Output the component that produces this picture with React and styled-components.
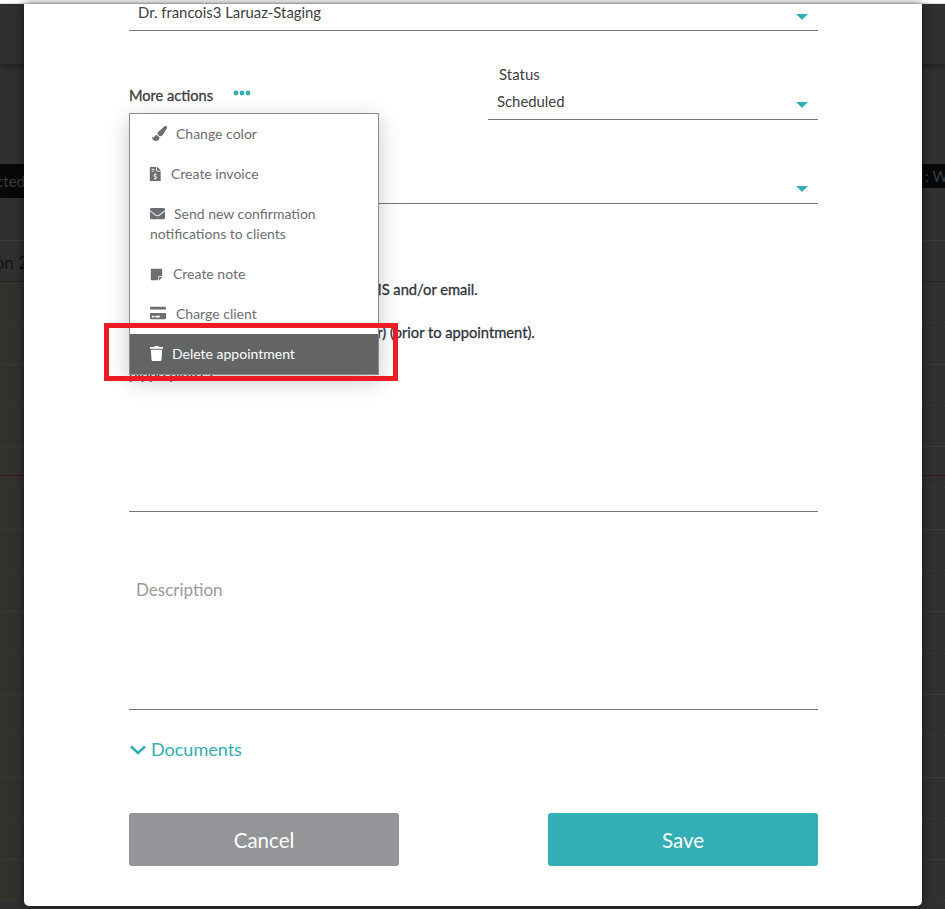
import React from 'react'
import styled, { createGlobalStyle } from 'styled-components'
import {
  FaPaintBrush,
  FaFileInvoiceDollar,
  FaEnvelope,
  FaStickyNote,
  FaCreditCard,
  FaTrash,
} from 'react-icons/fa'

const teal = '#33aeb4'

const GlobalStyle = createGlobalStyle`
  html, body {
    margin: 0;
    padding: 0;
    background: #2f3130;
  }
  body {
    font-family: Lato, "Open Sans", sans-serif;
    overflow: hidden;
  }
  * {
    box-sizing: border-box;
  }
`

const Page = styled.div`
  position: relative;
  width: 945px;
  height: 909px;
  overflow: hidden;
  background: #2f3130;
`

/* dimmed calendar behind the modal */
const TopStrip = styled.div`
  height: 4px;
  background: #fff;
  border-bottom: 1px solid #e2e2e2;
`

const BackHeader = styled.div`
  height: 60px;
  background: #2f2f2f;
  box-shadow: 0 3px 5px rgba(0, 0, 0, 0.35);
`

const ChipRow = styled.div`
  display: flex;
  justify-content: space-between;
  align-items: flex-start;
  margin-top: 100px;
  height: 76px;
`

const Chip = styled.div`
  display: flex;
  align-items: center;
  justify-content: ${(p) => (p.$right ? 'flex-start' : 'flex-end')};
  width: ${(p) => (p.$right ? '23px' : '25px')};
  height: ${(p) => (p.$right ? '24px' : '34px')};
  padding-left: ${(p) => (p.$right ? '3px' : '0')};
  overflow: hidden;
  white-space: nowrap;
  background: #06080a;
  color: #3c3c3c;
  font-size: 15px;
`

const BackTitle = styled.div`
  display: flex;
  align-items: center;
  justify-content: flex-end;
  width: 28px;
  height: 42px;
  overflow: hidden;
  white-space: nowrap;
  color: #131313;
  font-size: 17px;
`

const TitleRow = styled.div`
  height: 42px;
  border-top: 1px solid #3b3c3b;
  border-bottom: 1px solid #262626;
`

const CalendarRow = styled.div`
  height: 41.3px;
  background: linear-gradient(to right, #32312c 0, #32312c 24px, #2f3130 922px);
  border-bottom: 1px ${(p) => (p.$dotted ? 'dotted' : 'solid')} #383938;
`

const TimeLine = styled.div`
  position: absolute;
  left: 0;
  top: 475px;
  width: 100%;
  height: 1px;
  background: #3f1418;
`

/* modal */
const Modal = styled.div`
  position: absolute;
  left: 24px;
  top: 4px;
  width: 898px;
  height: 902px;
  padding: 0 104px 0 105px;
  background: #fff;
  border-radius: 0 0 5px 5px;
  box-shadow: 0 0 10px rgba(0, 0, 0, 0.6);
  color: #414042;
`

const SelectRow = styled.div`
  display: flex;
  justify-content: space-between;
  align-items: ${(p) => (p.$end ? 'flex-end' : 'flex-start')};
  height: ${(p) => p.$height}px;
  padding: ${(p) => (p.$end ? '0 10px 11px 0' : '0 10px 0 9px')};
  border-bottom: 1px solid #757575;
`

const SelectText = styled.span`
  font-size: 14.85px;
  line-height: 16px;
  color: #414042;
`

const Caret = styled.span`
  width: 0;
  height: 0;
  margin-top: ${(p) => p.$top || 0}px;
  border-left: 6px solid transparent;
  border-right: 6px solid transparent;
  border-top: 6px solid ${teal};
`

const StatusGrid = styled.div`
  display: grid;
  grid-template-columns: 359px 330px;
  margin-top: 34px;
`

const MoreActions = styled.div`
  display: flex;
  align-items: flex-start;
  gap: 20px;
  padding-top: 21px;
  font-size: 14.6px;
  line-height: 20px;
  color: #414042;
  -webkit-text-stroke: 0.3px #414042;
`

const Dots = styled.svg`
  width: 18px;
  height: 6px;
  margin-top: 4px;
  fill: ${teal};
`

const StatusLabel = styled.div`
  padding-left: 11px;
  font-size: 15px;
  line-height: 18px;
`

const StatusSelect = styled.div`
  display: flex;
  justify-content: space-between;
  height: 28px;
  margin-top: 9px;
  padding: 1px 10px 0 9px;
  border-bottom: 1px solid #757575;
`

const Notes = styled.div`
  height: 308px;
  padding-top: 75px;
  border-bottom: 1px solid #757575;
`

const NoteLine = styled.div`
  margin: 0 0 ${(p) => p.$gap || 0}px ${(p) => p.$indent || 0}px;
  font-size: 14.7px;
  line-height: 20px;
  white-space: nowrap;
  color: #30343a;
  -webkit-text-stroke: ${(p) => (p.$plain ? '0' : '0.3px #30343a')};
`

const Description = styled.div`
  height: 198px;
  padding: 68px 0 0 7px;
  font-size: 17px;
  line-height: 20px;
  color: #9a9a9a;
  border-bottom: 1px solid #757575;
`

const Documents = styled.div`
  display: flex;
  align-items: center;
  gap: 5px;
  margin-top: 29px;
  padding-left: 1px;
  font-size: 18px;
  line-height: 20px;
  color: ${teal};
`

const Chevron = styled.svg`
  width: 16px;
  height: 10px;
  margin-top: 2px;
  fill: none;
  stroke: ${teal};
  stroke-width: 2.6;
`

const Buttons = styled.div`
  display: flex;
  justify-content: space-between;
  margin-top: 54px;
`

const Button = styled.button`
  width: 270px;
  height: 53px;
  border: 0;
  border-radius: 3px;
  background: ${(p) => (p.$primary ? teal : '#939598')};
  color: #fff;
  font-family: inherit;
  font-size: 20.5px;
`

/* dropdown over the form */
const Menu = styled.ul`
  position: absolute;
  left: 105px;
  top: 109px;
  width: 250px;
  margin: 0;
  padding: 0;
  list-style: none;
  background: #fff;
  border: 1px solid #8c8c8c;
  box-shadow: 0 6px 20px rgba(0, 0, 0, 0.22);
`

const MenuItem = styled.li`
  padding: 10px 20px;
  font-size: 14px;
  line-height: 20px;
  background: ${(p) => (p.$active ? '#636466' : 'transparent')};
  color: ${(p) => (p.$active ? '#fff' : '#6d6e71')};
  svg {
    vertical-align: -2px;
    margin-right: ${(p) => p.$gap}px;
    margin-left: ${(p) => p.$shift || 0}px;
    font-size: ${(p) => p.$size || 15}px;
  }
`

const Highlight = styled.div`
  position: absolute;
  left: 104px;
  top: 323px;
  width: 294px;
  height: 58px;
  border: 5px solid #ed1c24;
`

const calendarRows = Array.from({ length: 15 }, (_, i) => i % 2 === 0)

const menuItems = [
  { icon: FaPaintBrush, label: 'Change color', gap: 9, shift: 2, size: 15 },
  { icon: FaFileInvoiceDollar, label: 'Create invoice', gap: 8.5, shift: -2, size: 14.5 },
  { icon: FaEnvelope, label: 'Send new confirmation notifications to clients', gap: 9, size: 15 },
  { icon: FaStickyNote, label: 'Create note', gap: 10, size: 13 },
  { icon: FaCreditCard, label: 'Charge client', gap: 10, size: 16 },
  { icon: FaTrash, label: 'Delete appointment', gap: 8, shift: -1, size: 15, active: true },
]

const App = () => (
  <Page>
    <GlobalStyle />
    <TopStrip />
    <BackHeader />
    <ChipRow>
      <Chip>Selected</Chip>
      <Chip $right>: Wait</Chip>
    </ChipRow>
    <TitleRow>
      <BackTitle>Option 2</BackTitle>
    </TitleRow>
    {calendarRows.map((dotted, i) => (
      <CalendarRow key={i} $dotted={dotted} />
    ))}
    <TimeLine />

    <Modal>
      <SelectRow $height={27}>
        <SelectText>Dr. francois3 Laruaz-Staging</SelectText>
        <Caret $top={10} />
      </SelectRow>

      <StatusGrid>
        <MoreActions>
          More actions
          <Dots viewBox="0 0 18 6">
            <circle cx="3" cy="3" r="2.4" />
            <circle cx="9" cy="3" r="2.4" />
            <circle cx="15" cy="3" r="2.4" />
          </Dots>
        </MoreActions>
        <div>
          <StatusLabel>Status</StatusLabel>
          <StatusSelect>
            <SelectText>Scheduled</SelectText>
            <Caret $top={9} />
          </StatusSelect>
        </div>
      </StatusGrid>

      <SelectRow $height={84} $end>
        <span />
        <Caret />
      </SelectRow>

      <Notes>
        <NoteLine $gap={23} $indent={27}>Send reminders to the client by SMS and/or email.</NoteLine>
        <NoteLine $gap={21} $indent={67}>Reminder will go out 24 hour) (prior to appointment).</NoteLine>
        <NoteLine $plain>pippo pluto 1</NoteLine>
      </Notes>

      <Description>Description</Description>

      <Documents>
        <Chevron viewBox="0 0 16 10">
          <polyline points="1,1.5 8,8 15,1.5" />
        </Chevron>
        Documents
      </Documents>

      <Buttons>
        <Button>Cancel</Button>
        <Button $primary>Save</Button>
      </Buttons>

      <Menu>
        {menuItems.map(({ icon: Icon, label, gap, shift, size, active }) => (
          <MenuItem key={label} $gap={gap} $shift={shift} $size={size} $active={active}>
            <Icon />
            {label}
          </MenuItem>
        ))}
      </Menu>
    </Modal>

    <Highlight />
  </Page>
)

export default App
